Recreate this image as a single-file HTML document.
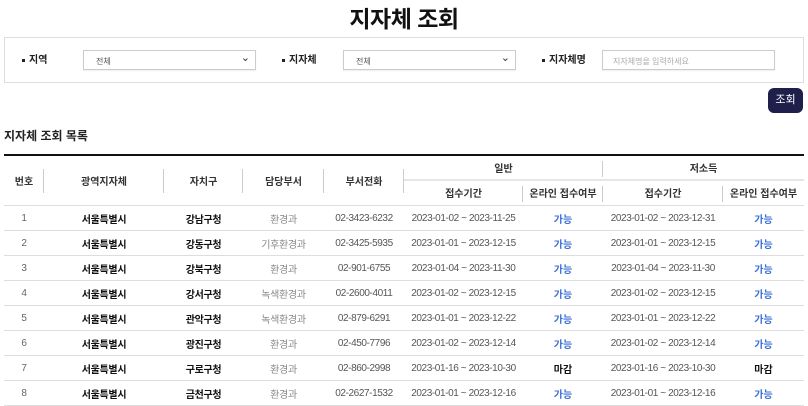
<!DOCTYPE html>
<html><head><meta charset="utf-8"><style>
*{margin:0;padding:0;box-sizing:border-box}
body{width:808px;height:404px;overflow:hidden;background:#fff;font-family:"Liberation Sans","Noto Sans CJK KR",sans-serif;color:#222;position:relative}
.abs{position:absolute}
h1{position:absolute;left:0;width:808px;top:0px;text-align:center;font-size:23px;font-weight:bold;color:#111;letter-spacing:-0.5px}
.box{left:4px;top:37px;width:800px;height:46px;border:1px solid #ddd}
.lab{font-size:10px;font-weight:bold;color:#222;top:51px}
.lab:before{content:"";display:inline-block;width:3px;height:3px;background:#222;margin-right:4px;vertical-align:middle}
.sel{top:50px;height:20px;border:1px solid #ccc;background:#fff;font-size:8px;color:#555;padding:5px 0 0 12px;box-shadow:0 1px 1px #eee}
.dd:after{content:"⌄";position:absolute;right:5px;top:0px;font-size:11px;color:#333}
.btn{left:768px;top:88px;width:35px;height:25px;background:#1e1f4a;color:#fff;border-radius:6px;font-size:11px;text-align:center;line-height:25px}
.st{left:4px;top:127px;font-size:12px;font-weight:bold;color:#222}
table{position:absolute;left:4px;top:154px;width:800px;border-collapse:collapse;border-top:2px solid #111;font-size:10px}
td,th{text-align:center;height:25px;padding:0;border-bottom:1px solid #ddd;white-space:nowrap}
td{padding-top:2px}
th{font-weight:bold;color:#333;font-size:10px;position:relative}
th.s:after{content:"";position:absolute;right:0;top:13px;height:24px;border-right:1px solid #ccc}
th.s2:after{content:"";position:absolute;right:0;top:5px;height:16px;border-right:1px solid #ccc}
td{color:#555;letter-spacing:-0.4px}
td.n{color:#666}
td.b{font-weight:bold;color:#111;letter-spacing:-0.3px}
td.g{color:#888;letter-spacing:-0.3px}
td.k{color:#3b6fd8;font-weight:bold;letter-spacing:0}
td.m{color:#111;font-weight:bold;letter-spacing:0}
</style></head><body>
<h1>지자체 조회</h1>
<div class="abs box"></div>
<div class="abs lab" style="left:22px">지역</div>
<div class="abs sel dd" style="left:83px;width:173px">전체</div>
<div class="abs lab" style="left:282px">지자체</div>
<div class="abs sel dd" style="left:343px;width:173px">전체</div>
<div class="abs lab" style="left:542px">지자체명</div>
<div class="abs sel" style="left:602px;width:173px;color:#aaa;padding-left:10px">지자체명을 입력하세요</div>
<div class="abs btn">조회</div>
<div class="abs st">지자체 조회 목록</div>
<table>
<colgroup><col style="width:40px"><col style="width:120px"><col style="width:79px"><col style="width:81px"><col style="width:80px"><col style="width:119px"><col style="width:80px"><col style="width:120px"><col style="width:81px"></colgroup>
<tr><th rowspan="2" class="s">번호</th><th rowspan="2" class="s">광역지자체</th><th rowspan="2" class="s">자치구</th><th rowspan="2" class="s">담당부서</th><th rowspan="2" class="s">부서전화</th><th colspan="2" class="s2" style="border-bottom:2px solid #e5e5e5">일반</th><th colspan="2" style="border-bottom:2px solid #e5e5e5">저소득</th></tr>
<tr><th class="s2">접수기간</th><th class="s2">온라인 접수여부</th><th class="s2">접수기간</th><th>온라인 접수여부</th></tr>
<tr><td class="n">1</td><td class="b">서울특별시</td><td class="b">강남구청</td><td class="g">환경과</td><td>02-3423-6232</td><td>2023-01-02 ~ 2023-11-25</td><td class="k">가능</td><td>2023-01-02 ~ 2023-12-31</td><td class="k">가능</td></tr>
<tr><td class="n">2</td><td class="b">서울특별시</td><td class="b">강동구청</td><td class="g">기후환경과</td><td>02-3425-5935</td><td>2023-01-01 ~ 2023-12-15</td><td class="k">가능</td><td>2023-01-01 ~ 2023-12-15</td><td class="k">가능</td></tr>
<tr><td class="n">3</td><td class="b">서울특별시</td><td class="b">강북구청</td><td class="g">환경과</td><td>02-901-6755</td><td>2023-01-04 ~ 2023-11-30</td><td class="k">가능</td><td>2023-01-04 ~ 2023-11-30</td><td class="k">가능</td></tr>
<tr><td class="n">4</td><td class="b">서울특별시</td><td class="b">강서구청</td><td class="g">녹색환경과</td><td>02-2600-4011</td><td>2023-01-02 ~ 2023-12-15</td><td class="k">가능</td><td>2023-01-02 ~ 2023-12-15</td><td class="k">가능</td></tr>
<tr><td class="n">5</td><td class="b">서울특별시</td><td class="b">관악구청</td><td class="g">녹색환경과</td><td>02-879-6291</td><td>2023-01-01 ~ 2023-12-22</td><td class="k">가능</td><td>2023-01-01 ~ 2023-12-22</td><td class="k">가능</td></tr>
<tr><td class="n">6</td><td class="b">서울특별시</td><td class="b">광진구청</td><td class="g">환경과</td><td>02-450-7796</td><td>2023-01-02 ~ 2023-12-14</td><td class="k">가능</td><td>2023-01-02 ~ 2023-12-14</td><td class="k">가능</td></tr>
<tr><td class="n">7</td><td class="b">서울특별시</td><td class="b">구로구청</td><td class="g">환경과</td><td>02-860-2998</td><td>2023-01-16 ~ 2023-10-30</td><td class="m">마감</td><td>2023-01-16 ~ 2023-10-30</td><td class="m">마감</td></tr>
<tr><td class="n">8</td><td class="b">서울특별시</td><td class="b">금천구청</td><td class="g">환경과</td><td>02-2627-1532</td><td>2023-01-01 ~ 2023-12-16</td><td class="k">가능</td><td>2023-01-01 ~ 2023-12-16</td><td class="k">가능</td></tr>
</table>
</body></html>
